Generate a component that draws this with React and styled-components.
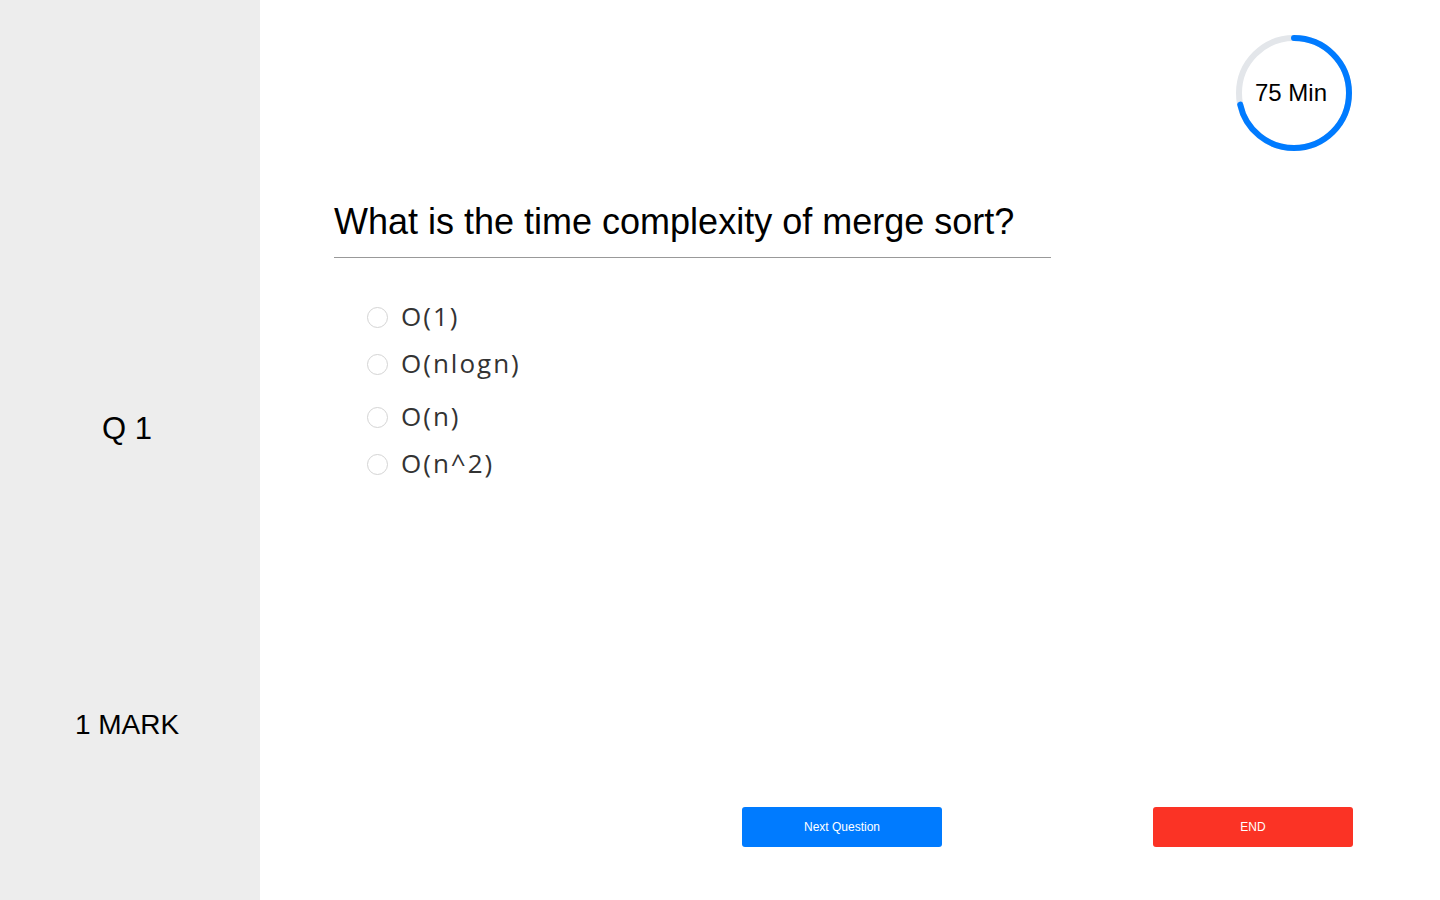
import React from 'react'
import styled, { createGlobalStyle } from 'styled-components'

const GlobalStyle = createGlobalStyle`
  html, body {
    margin: 0;
    padding: 0;
    background: #fff;
    font-family: "Liberation Sans", Arial, sans-serif;
  }
`

const options = [
  { id: 'a', text: 'O(1)' },
  { id: 'b', text: 'O(nlogn)' },
  { id: 'c', text: 'O(n)', spaced: true },
  { id: 'd', text: 'O(n^2)' },
]

const Page = styled.div`
  display: flex;
  width: 100%;
  height: 900px;
`

const Sidebar = styled.aside`
  width: 260px;
  box-sizing: border-box;
  padding-right: 6px;
  flex-shrink: 0;
  background-color: #ededed;
  display: flex;
  flex-direction: column;
  align-items: center;
  color: #000;
`

const QuestionNo = styled.div`
  font-size: 31px;
  margin-top: 411px;
  line-height: 36px;
`

const Marks = styled.div`
  font-size: 28px;
  margin-top: 262px;
  line-height: 32px;
`

const Main = styled.main`
  flex: 1;
  display: flex;
  flex-direction: column;
  padding: 34px 87px 53px 74px;
`

const TopBar = styled.div`
  display: flex;
  justify-content: flex-end;
`

const Timer = styled.div`
  position: relative;
  width: 118px;
  height: 118px;
  svg {
    display: block;
  }
`

const TimerLabel = styled.span`
  position: absolute;
  inset: 0;
  display: flex;
  align-items: center;
  justify-content: center;
  padding-right: 6px;
  font-size: 24px;
  color: #000;
`

const Question = styled.h1`
  margin: 48px 0 0;
  width: 717px;
  font-weight: 400;
  font-size: 36px;
  line-height: 44px;
  padding-bottom: 13px;
  border-bottom: 1px solid #999;
  color: #000;
`

const OptionList = styled.ul`
  list-style: none;
  margin: 34px 0 0;
  padding: 0 0 0 33px;
`

const Option = styled.li`
  display: flex;
  align-items: center;
  height: 47px;
  margin-top: ${(p) => (p.$spaced ? '6px' : '0')};
  font-family: "Open Sans", sans-serif;
  font-size: 26px;
  letter-spacing: 2px;
  color: #333;
  cursor: pointer;
`

const Radio = styled.span`
  width: 19px;
  height: 19px;
  border: 1px solid #d4d4d4;
  border-radius: 50%;
  margin: 3px 13px 0 0;
  flex-shrink: 0;
`

const Footer = styled.div`
  margin-top: auto;
  display: flex;
  justify-content: flex-end;
  gap: 211px;
`

const Button = styled.button`
  all: unset;
  box-sizing: border-box;
  width: 200px;
  height: 40px;
  border-radius: 3px;
  background-color: ${(p) => p.$bg};
  color: #fff;
  font-family: "Liberation Sans", Arial, sans-serif;
  font-size: 12px;
  text-align: center;
  cursor: pointer;
`

const R = 55
const C = 2 * Math.PI * R

const App = () => {
  const progress = 0.715
  return (
    <Page>
      <GlobalStyle />
      <Sidebar>
        <QuestionNo>Q 1</QuestionNo>
        <Marks>1 MARK</Marks>
      </Sidebar>
      <Main>
        <TopBar>
          <Timer>
            <svg width="118" height="118" viewBox="0 0 118 118">
              <circle cx="59" cy="59" r={R} fill="none" stroke="#e3e6ea" strokeWidth="6" />
              <circle
                cx="59"
                cy="59"
                r={R}
                fill="none"
                stroke="#007bff"
                strokeWidth="6"
                strokeLinecap="round"
                strokeDasharray={`${C * progress} ${C}`}
                transform="rotate(-90 59 59)"
              />
            </svg>
            <TimerLabel>75 Min</TimerLabel>
          </Timer>
        </TopBar>
        <Question>What is the time complexity of merge sort?</Question>
        <OptionList>
          {options.map((o) => (
            <Option key={o.id} $spaced={o.spaced}>
              <Radio />
              {o.text}
            </Option>
          ))}
        </OptionList>
        <Footer>
          <Button type="button" $bg="#007bff">Next Question</Button>
          <Button type="button" $bg="#fb3325">END</Button>
        </Footer>
      </Main>
    </Page>
  )
}

export default App
